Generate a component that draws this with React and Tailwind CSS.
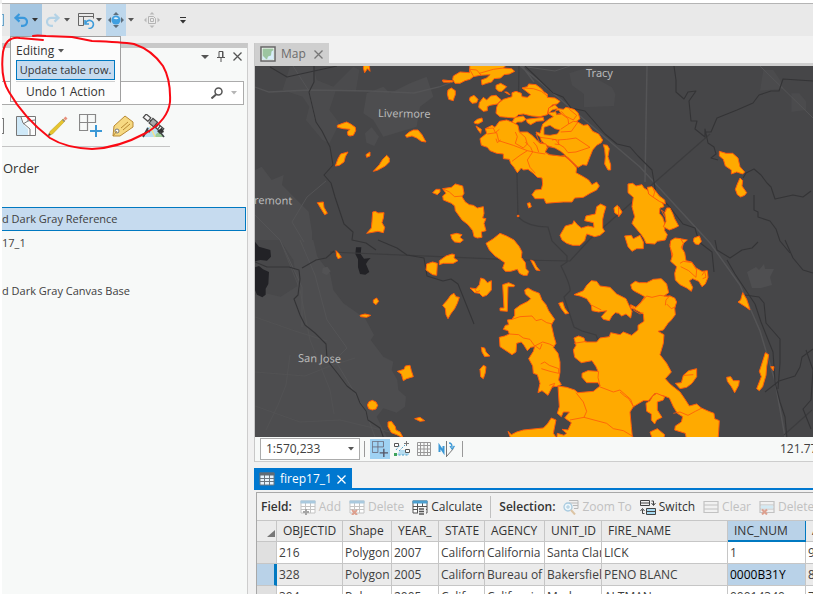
import React from "react";

const Caret = ({ className = "text-[#555]" }) => (
  <svg viewBox="0 0 6 4" className={"h-1 w-1.5 shrink-0 " + className} aria-hidden="true">
    <path d="M0 0h6L3 3.5z" fill="currentColor" />
  </svg>
);

/* ---------- icons ---------- */

const UndoIcon = ({ color }) => (
  <svg viewBox="0 0 14 14" className="h-3.5 w-3.5" fill="none" stroke={color} strokeWidth="2.200">
    <path d="M5.500 1 1.500 4.800l4 3.800M1.500 4.800H9a4 4 0 0 1 0 8H7" />
  </svg>
);

const RedoIcon = ({ color }) => (
  <svg viewBox="0 0 14 14" className="h-3.5 w-3.5" fill="none" stroke={color} strokeWidth="2.200">
    <path d="M8.500 1l4 3.800-4 3.800M12.500 4.800H5a4 4 0 0 0 0 8h2" />
  </svg>
);

const PaneIcon = () => (
  <svg viewBox="0 0 17 17" className="h-[17px] w-[17px]" fill="none">
    <path d="M.5 1.500h15v5M.5 1.500v12h5M.5 4.500h15M5.500 4.500v9" stroke="#666" />
    <path d="M7 8v4h4M7.500 11.500a4 4 0 1 1 3 4.800" stroke="#3d9bd9" strokeWidth="1.600" />
  </svg>
);

const ExploreIcon = () => (
  <svg viewBox="0 0 16 16" className="h-4 w-4">
    <path d="M8 0l3 3H5zM8 16l3-3H5zM0 8l3-3v6zM16 8l-3-3v6z" fill="#5f6f7c" />
    <circle cx="8" cy="8" r="4.500" fill="#3f9fe0" />
    <path d="M5.500 6.500q2-2.500 5 0-2 1.500-5 0" fill="#dff1fb" />
  </svg>
);

const FullExtentIcon = () => (
  <svg viewBox="0 0 16 16" className="h-4 w-4">
    <path d="M8 0l2.500 2.500h-5zM8 16l2.500-2.500h-5zM0 8l2.500-2.500v5zM16 8l-2.500-2.500v5z" fill="#b9b9b9" />
    <path d="M4.500 4.500h5l2 2v5h-7zM6.500 6.500h3v3h-3z" fill="#ececec" stroke="#b4b4b4" />
  </svg>
);

const SelectionIcon = () => (
  <svg viewBox="0 0 20 20" className="h-5 w-5">
    <path d="M.5.5h19v19H.5z" fill="#fbfcfc" stroke="#777" />
    <path d="M1 1h4l2 7 5 5v6H1z" fill="#cfe9f8" />
    <path d="M5 1l2 6 7 6v6M19 4l-7 1-5 3M12 5V1" fill="none" stroke="#777" />
  </svg>
);

const PencilIcon = () => (
  <svg viewBox="0 0 20 20" className="h-5 w-5">
    <path d="M.5 19.500l1.500-4L15 3l2 2L4.500 18z" fill="#e6c52e" stroke="#c3a223" strokeWidth=".6" />
    <path d="M15.500 2.500l2 2 2-2-2-2z" fill="#e8907c" />
    <path d="M14.500 3.500l2 2" stroke="#8a8a8a" strokeWidth="1.300" />
    <path d="M0 20l1-3 2 2z" fill="#444" />
  </svg>
);

const GridPlusIcon = ({ size = "h-[23px] w-[23px]", line = "#888", plus = "#3a98d6", weight = 1.2 }) => (
  <svg viewBox="0 0 23 23" className={size} fill="none">
    <path d="M.5.5h16v8h-8v8h-8zM8.500.5v8h-8" stroke={line} strokeWidth={weight} />
    <path d="M17 11v12M11 17h12" stroke={plus} strokeWidth="2" />
  </svg>
);

const TagIcon = () => (
  <svg viewBox="0 0 22 22" className="h-[22px] w-[22px]">
    <path d="M2 11 13 1l8 6v5L8 21H1z" fill="#f6d982" stroke="#b98a34" />
    <circle cx="5" cy="16" r="2" fill="#fff" stroke="#777" />
    <path d="M9 13l7-6M11 15l7-6M5 16l-4 5" stroke="#b98a34" fill="none" />
  </svg>
);

const SatelliteIcon = () => (
  <svg viewBox="0 0 24 24" className="h-6 w-6">
    <path d="M5 13h11l7 10H1z" fill="#b9dff0" />
    <path d="M14 20l4-3 4 6h-9z" fill="#9dcc9a" />
    <path d="M8 12l5 11" stroke="#f3e28c" strokeWidth="1.500" />
    <g transform="rotate(40 11 9)" stroke="#4a4a4a" strokeWidth="1.200">
      <path d="M0 6.500h6v4.500H0zM16 6.500h7v4.500h-7z" fill="#f4f4f4" />
      <path d="M8 5.500h6v6H8z" fill="#aaa" />
      <path d="M6 8.700h2M14 8.700h2M18.500 6.500v4.500M21 6.500v4.500" fill="none" />
    </g>
    <path d="M6 14L1 23M4 16l4 2" stroke="#444" strokeWidth="1.800" fill="none" />
    <path d="M15 17l5-3 2 4-4 2z" fill="#333" />
    <path d="M18 18l4 5" stroke="#444" strokeWidth="1.500" />
  </svg>
);

const MapIcon = () => (
  <svg viewBox="0 0 16 16" className="h-4 w-4">
    <path d="M1 1h14v14H1z" fill="#fff" stroke="#666" strokeWidth="1.500" />
    <path d="M2.500 2.500h11v11h-11z" fill="#9cc5a0" />
    <path d="M13.500 4v9.500H7l1-3 3-1 .5-4zM2.500 9.500l4 4h-4z" fill="#d8eefb" />
  </svg>
);

const CloseIcon = ({ className }) => (
  <svg viewBox="0 0 9 9" className={"h-[9px] w-[9px] " + className} stroke="currentColor" strokeWidth="1.300">
    <path d="M.5.5l8 8M8.500.5l-8 8" />
  </svg>
);

const TableIcon = ({ head, line, mark }) => (
  <svg viewBox="0 0 16 16" className="h-4 w-4" fill="none">
    <path d="M1 2h14v12H1z" fill="#fff" fillOpacity=".9" stroke={line} />
    <path d="M1 7.500h14M1 10.500h14M5.500 4v10M10.500 4v10" stroke={line} />
    <path d="M.5 1.500h15v3H.5z" fill={head} />
    {mark === "plus" && <path d="M6 10v6M3 13h6" stroke="#a5a5a5" strokeWidth="2" />}
    {mark === "x" && <path d="M3 11l5 5M8 11l-5 5" stroke="#dda08f" strokeWidth="2" />}
    {mark === "calc" && (
      <>
        <path d="M6 8h8v8H6z" fill="#f1f1f1" />
        <path d="M7 10h5M7 12.500h5M7 15h5" stroke="#555" strokeWidth="1.500" />
      </>
    )}
  </svg>
);

const ListIcon = ({ mark }) => (
  <svg viewBox="0 0 16 16" className="h-4 w-4" fill="none">
    <path d="M1 2.500h14v11H1zM1 6h14M1 10h14" stroke="#c2c2c2" strokeWidth="1.200" />
    {mark && <path d="M2 6.500h12v3H2z" fill="#d4eaf4" />}
    {mark && <path d="M3 10.500l5 5M8 10.500l-5 5" stroke="#dda08f" strokeWidth="2" />}
  </svg>
);

const ZoomToIcon = () => (
  <svg viewBox="0 0 16 16" className="h-4 w-4" fill="none">
    <path d="M6 1.500h9v8h-4M6 4h9M10 6.500h5" stroke="#b8b8b8" />
    <circle cx="5" cy="8" r="4" fill="#eef7fb" stroke="#a9cbe0" strokeWidth="1.300" />
    <path d="M3 8h4M5 6v4" stroke="#a9cbe0" />
    <path d="M8 11l4 4.500" stroke="#dcc4a4" strokeWidth="2" />
  </svg>
);

const SwitchIcon = () => (
  <svg viewBox="0 0 16 16" className="h-4 w-4" fill="none">
    <path d="M.5 1.500h9v5h-9zM.5 4h9" stroke="#444" />
    <path d="M6.500 9.500h9v6h-9z" fill="#a9dbf3" stroke="#444" />
    <path d="M6.500 12.500h9M11.500 2h2v4M11.500 4l2 2.500 2-2.500M4.500 14.500h-2v-4M.5 12l2-2.500 2 2.500" stroke="#444" />
  </svg>
);

const SelectedFeatureIcon = () => (
  <svg viewBox="0 0 16 16" className="h-4 w-4" fill="none">
    <path d="M3 14l3-5h9v5z" fill="#b5dcf0" />
    <path d="M.5 2.500h4v3h-4zM11.500 8.500h4v3h-4z" fill="#fff" stroke="#555" />
    <path d="M12.500 0v5M10 2.500h5" stroke="#777" />
    <path d="M2 9l4-5M5 10l6-6M1 14h14" stroke="#4a9fc9" strokeDasharray="2 1.500" />
    <path d="M0 12h3v3H0z" fill="#3fa35a" />
  </svg>
);

const GridIcon = () => (
  <svg viewBox="0 0 14 14" className="h-3.5 w-3.5" fill="none" stroke="#999">
    <path d="M.5.5h13v13H.5zM3.500.5v13M7 .5v13M10.500.5v13M.5 3.500h13M.5 7h13M.5 10.500h13" />
  </svg>
);

const NorthIcon = () => (
  <svg viewBox="0 0 17 16" className="h-4 w-[17px]" fill="none">
    <path d="M1.500 11V5l4 6V5" stroke="#3a98d6" strokeWidth="2" />
    <path d="M8.500 0v16M8.500 15.500l7-8" stroke="#777" />
    <path d="M11 2q3 0 3 4M12 5l2 3 2.500-3" stroke="#3a98d6" strokeWidth="1.300" />
  </svg>
);

const Poly = ({ list }) => list.map((p, i) => <polygon key={i} points={p} />);
const Lines = ({ list }) => list.map((p, i) => <polyline key={i} points={p} />);

/* ---------- map layers; every group is a tile drawn at three units per pixel ---------- */

const firesNW = [
  "262,256 278,250 290,246 302,252 316,262 317,272 310,286 300,288 294,286 292,276 300,268 280,266 262,262",
  "466,286 478,276 490,270 504,270 516,284 528,306 514,304 500,294 486,288 470,292",
  "256,378 264,356 272,342 294,336 286,350 282,366 268,376",
  "348,344 360,336 360,348 350,352",
  "370,394 388,374 398,358 410,346 418,354 418,366 406,378 384,390",
  "202,488 220,486 222,502 232,520 224,524 214,508",
  "368,516 376,514 384,519 402,518 400,534 396,548 404,562 400,578 384,574 350,580 364,564 366,544",
  "342,70 358,78 360,94 352,86 344,98 340,84",
  "578,120 600,122 600,126 580,126",
  "548,458 558,448 570,448 570,456 562,464",
];

const firesN = [
  "40,48 60,36 88,38 90,14 200,14 190,24 215,26 224,34 208,42 192,44 182,54 162,56 155,66 140,70 126,75 124,60 140,54 150,44 120,46 100,50 90,58 75,62 60,70 45,70 38,58",
  "8,61 38,62 38,66 10,66",
  "24,90 34,84 46,92 46,104 42,114 40,122 26,118 22,102",
  "168,76 182,70 200,80 194,86 186,94 176,94 168,86",
  "90,112 102,106 114,118 110,128 96,130 88,120",
  "130,112 140,120 152,108 168,106 184,120 172,132 150,136 142,140 142,152 130,154 116,142 118,128",
  "175,130 190,118 216,110 216,98 228,94 244,100 246,110 262,112 272,104 246,84 262,80 266,72 288,74 304,86 312,96 322,102 322,112 345,114 360,124 352,132 338,134 326,146 322,164 300,170 275,168 250,162 235,164 225,174 200,172 180,170 168,160 170,142",
  "214,190 225,172 250,168 258,178 246,186 232,186 222,196",
  "258,178 310,172 312,182 290,184 272,194 262,188",
  "326,144 345,134 356,146 370,148 378,142 402,148 414,158 420,176 410,184 430,196 444,194 458,214 476,222 488,240 484,248 470,256 458,270 450,290 440,316 428,314 414,322 400,308 380,290 370,280 345,272 338,262 318,256 306,244 296,232 288,216 300,220 308,192 326,178 340,170 324,160",
  "120,236 140,220 136,206 156,196 165,202 178,184 200,180 220,188 234,196 238,216 262,216 276,226 290,240 300,250 318,252 322,262 316,276 326,284 362,288 376,290 396,308 410,324 408,338 430,350 446,360 456,374 470,366 478,378 470,390 450,400 430,412 404,414 396,426 370,426 340,428 318,430 312,416 285,416 276,404 286,390 304,388 308,372 306,354 292,352 280,340 264,328 250,330 244,324 232,338 222,322 212,310 208,298 190,296 190,282 170,280 150,272 142,262 124,256",
  "102,186 112,178 126,174 128,184 114,192 104,190",
  "108,198 124,208 122,220 114,210",
  "490,254 502,256 508,266 504,290 512,314 512,330 504,330 494,312 496,290 494,268",
  "262,430 270,428 274,440 266,444",
  "8,386 34,382 46,372 68,378 72,400 66,410 76,426 88,434 100,436 112,444 130,440 132,460 128,474 138,476 132,490 138,512 124,516 126,532 112,534 102,530 98,512 84,494 66,480 46,452 44,438 34,430 10,420 8,408 18,400",
  "32,524 50,520 66,524 60,532 70,540 60,548 44,546 36,538",
  "360,526 376,498 398,492 402,482 412,494 424,504 444,498 462,502 460,488 434,482 438,468 466,462 470,440 482,432 498,440 492,460 488,478 488,504 494,514 480,526 464,530 440,522 434,542 420,556 398,556 380,550 366,540",
  "522,444 532,436 546,456 538,468 524,458",
  "194,96 202,96 210,104 204,102",
  "232,466 237,466 237,470 232,470",
];
const holesN = [
  "312,202 330,196 345,206 360,210 352,222 330,226 312,224",
  "326,260 345,264 362,274 376,286 362,288 330,284 316,276",
  "346,152 356,150 364,162 350,164",
  "328,158 336,150 352,146 344,156",
  "288,222 300,230 306,250 298,246",
];
const linesN = [
  "90,28 110,30 124,46 118,40 160,28 190,24", "250,84 280,86 304,94 322,108", "100,48 90,30",
  "352,162 362,160 384,176 386,192 362,208", "386,192 400,184 414,186 394,214 362,216", "364,154 376,168 400,180 410,166 388,148",
  "300,232 330,236 352,240 380,238 408,234 450,262 408,276 384,278 372,262 356,252 356,240", "336,240 346,238 358,254 344,252z",
  "142,222 170,218 176,242 220,256 262,272 240,286 216,304", "168,236 172,248 182,240", "226,216 232,230 226,250 250,264 262,252 256,232 238,216",
  "262,272 290,278 316,282", "280,246 290,258 296,276", "256,246 272,262 278,276 262,300 270,322 286,340", "138,206 160,204 166,218 178,208",
  "8,386 28,396 44,410 68,408", "382,290 400,310 412,322",
];

const firesNE = [
  "24,372 38,370 48,378 66,374 72,384 82,390 100,410 126,424 132,440 120,444 118,460 128,472 134,490 134,512 142,524 136,540 112,544 104,552 78,550 72,536 64,524 44,500 36,490 44,470 36,440 40,412 24,398",
  "82,382 96,380 106,392 118,408 134,420 136,432 118,424 100,412 86,402",
  "134,458 140,444 150,444 158,460 164,476 176,498 164,504 148,510 130,500 138,484",
  "14,528 34,526 40,536 60,526 70,546 70,566 50,566 36,574 24,560",
  "222,534 238,528 244,544 236,554 226,552 220,544",
  "298,274 318,280 338,280 354,294 360,320 374,336 368,342 350,336 334,342 334,330 316,318 310,298 298,288",
  "352,372 360,354 368,362 366,378 380,398 374,406 362,411 352,404 346,388",
  "-4,440 6,456 -4,470",
  "150,552 160,540 180,536 202,540 190,550 186,566 182,590 156,590",
];
const linesNE = ["98,382 104,396 100,410", "134,458 124,450 134,470", "140,446 136,456"];

const firesSW = [
  "258,32 266,40 274,52 264,56 260,48",
  "530,72 548,66 562,70 560,106 548,104 528,90",
  "370,180 380,174 386,184 378,194 370,188",
  "330,226 345,222 362,226 350,232 332,230",
  "442,394 462,388 466,378 480,376 484,392 490,410 470,416 460,422 454,402",
  "352,495 357,485 367,481 378,486 383,496 378,507 367,510 356,506",
  "414,546 424,544 436,560 438,570 450,576 460,594 440,584 424,578 414,560",
  "494,536 510,532 524,542 510,544",
];

const firesS = [
  "-2,62 18,48 36,42 44,44 42,54 54,62 40,70 10,70 -2,74",
  "138,10 160,-4 180,-20 200,-12 222,0 238,20 246,36 244,52 256,68 258,86 266,94 262,106 250,106 238,100 232,88 212,94 196,94 188,84 194,68 180,58 165,48 148,30",
  "8,196 22,180 32,166 42,160 48,170 58,172 52,190 44,206 32,222 24,236 18,224 16,206",
  "90,144 108,146 118,134 122,114 134,118 142,128 154,122 154,150 140,166 128,170 118,160 104,158",
  "188,134 206,128 224,136 222,140 204,140 202,214 180,212 180,204 192,204",
  "272,60 282,64 290,80 300,92 288,90 280,76",
  "254,150 264,144 278,152 298,160 306,180 318,194 326,212 344,238 334,254 342,290 348,310 340,322 354,340 360,366 360,396 356,420 364,434 348,440 338,438 332,450 324,466 314,458 306,452 294,458 300,430 292,404 280,400 278,378 266,356 280,334 284,320 272,322 262,332 252,316 244,306 230,310 228,336 216,344 198,332 180,320 178,292 194,288 208,282 204,272 190,268 196,256 206,254 202,240 216,238 224,226 224,208 240,196 264,184 272,176 256,162",
  "356,190 368,186 374,204 386,220 376,222 364,206",
  "402,164 430,152 440,136 454,122 470,124 480,138 510,142 530,162 550,172 558,176 568,198 576,214 572,234 558,222 545,228 536,220 526,218 516,228 508,242 490,238 484,230 500,212 476,216 456,212 454,196 440,176 420,168",
  "402,294 416,288 432,294 436,306 470,306 480,294 508,290 512,278 540,284 550,276 575,286 594,270 594,256 612,244 610,222 595,214 584,208 572,204 572,194 588,202 602,188 614,170 600,162 584,154 576,148 572,134 586,124 598,128 620,128 640,118 664,116 680,132 686,158 672,168 690,168 704,174 710,186 704,204 706,224 694,240 684,250 670,270 654,274 672,284 670,310 660,344 680,370 694,396 676,416 690,432 700,440 720,456 734,476 748,498 770,492 784,504 806,514 822,520 824,536 838,542 836,575 834,600 740,600 736,580 704,570 706,558 724,546 728,530 712,520 700,500 688,474 672,468 658,466 645,460 625,482 610,482 590,494 580,500 570,516 574,560 578,600 350,600 352,580 372,586 380,580 366,568 384,570 394,548 374,534 388,516 370,516 364,530 352,520 358,500 354,438 380,442 404,450 414,458 460,454 480,438 474,428 440,428 426,412 426,400 444,392 474,394 468,380 456,362 424,368 404,352 400,330 408,316",
  "204,574 214,584 230,576 250,570 310,564 322,552 334,534 348,540 344,560 340,580 354,600 214,600",
  "124,322 134,324 138,336 150,348 134,350 126,336",
  "120,388 130,376 138,380 136,398 130,416 122,410",
];
const linesS = [
  "216,238 240,230 276,228 288,242 304,238 320,248 338,252", "208,282 236,284 250,294 270,298 284,318 308,306 328,312 344,320", "286,318 300,328 306,312",
  "302,372 314,366 328,376 356,386 356,400 330,394 304,386z", "328,436 344,430 338,444",
  "478,440 520,456 540,450 572,478 580,500", "408,458 430,486 440,514 432,532 390,540", "432,532 500,550 520,566 550,572 580,590",
  "476,394 474,412 480,438", "402,310 440,304", "104,146 110,156 120,152", "456,196 484,210",
];

const firesSE = [
  "150,20 152,2 165,-6 182,-4 190,10 184,22 194,38 198,62 215,66 228,84 246,94 262,92 264,112 256,132 246,140 236,124 218,116 208,122 218,142 214,154 200,144 180,134 166,120 164,100 170,80 152,64 158,44",
  "354,186 362,180 368,158 380,178 386,196 390,210 376,200",
  "436,338 446,344 440,380 438,406 428,440 418,452 410,446 424,410 418,394 424,376",
  "452,380 462,380 460,392",
  "166,430 184,428 190,406 206,392 230,386 230,410 216,430 200,442 180,446",
  "320,412 332,410 340,422 358,422 356,436 344,458 334,440 322,424",
  "90,576 112,566 134,584 130,600 98,600",
  "98,468 110,460 134,470 130,480 112,486 112,510 126,532 110,540 104,552 94,540 94,522 80,514 78,490 90,482",
];
const linesSE = [
  "30,196 44,206 70,180 80,168 96,172 120,166 146,170", "40,210 60,222 70,218", "136,196 138,180 150,166", "140,192 154,206 168,200",
  "180,70 190,64 216,68 230,90 228,112 206,92 182,80z", "246,106 254,94 258,112 248,116", "192,406 220,404",
  "0,456 14,468 26,476 42,502", "160,520 180,516 204,526 226,514 246,504",
];

const Tile = ({ x, y, fires, holes, lines }) => (
  <g transform={`translate(${x} ${y}) scale(.33333)`} strokeLinejoin="round">
    <g fill="#ffaa00" stroke="#ff5a0a" strokeWidth="3"><Poly list={fires} /></g>
    {holes && <g fill="#464648" stroke="#ff5a0a" strokeWidth="2.500"><Poly list={holes} /></g>}
    {lines && <g fill="none" stroke="#ff5a0a" strokeWidth="2.500"><Lines list={lines} /></g>}
  </g>
);

const FireMap = () => (
  <svg
    viewBox="255 66 558 371"
    preserveAspectRatio="xMinYMin slice"
    className="block h-full w-full bg-[#464648]"
    role="img"
    aria-label="Fire perimeters map"
  >
    {/* built-up areas */}
    <g transform="translate(250 40) scale(.33333)" fill="#4d4d4f">
      <path d="M15 390l20-10 30 40 36-15-5 30 80 80 10 60 0 30H15z" />
      <path d="M120 80h70l10 40 50 20 60-60 18 10-10 60-60 0-20 60 30 40-30 60-20-10-50-60 10-40-20-30-60-20z" opacity=".75" />
      <path d="M350 160l50-20 20 20 60-30 50-20 20 60-40 30-10 60-100 30-30-50-30-20z M345 280l20-18 22 28-14 28-24-10z" />
    </g>
    <g transform="translate(250 240) scale(.33333)" fill="#4d4d4f">
      <path d="M15 0H190L202 50 240 100 250 150 280 190 345 235 372 285 362 300 400 350 430 365 425 390 442 420 445 450 468 470 465 500 440 518 400 505 380 530 410 590H15z" />
      <path d="M15 0H90L130 60 142 138 92 170 40 158 15 165z" fill="#48484a" />
      <path d="M218 84l14-4 10 14-12 12-14-8z" fill="#525254" />
      {/* lakes */}
      <g fill="#222226">
        <path d="M15 5l12 15 34 10 2 20-12 12-20-2-16 4z" />
        <path d="M15 82l12-4 12 10 18 8-2 36-8 14 0 18-10 8-16-8-6-14z" />
        <path d="M318 22l16 0-2 20 10 14 20-2-8 8-6 10 10 24-12 8-16-2-6-20 0-24-8-16z" />
      </g>
    </g>
    <g transform="translate(440 60) scale(.33333)" fill="#4b4b4d">
      <path d="M388 40l60-20 34 14-6 26 40 22 10 20-4 36-90 4 0-40-36-26z" />
    </g>
    <g transform="translate(620 60) scale(.33333)" fill="#4b4b4d">
      <path d="M430 30l30 0 20 30 10 26-70 6z M514 100l24 0 20 24 0 26-44 6z" />
    </g>
    <path d="M747 272l9-5 3 3 5-6 1 5 9 0-4 8 2 8-11 3-9 0z" fill="#4f4f51" />

    {/* roads */}
    <g fill="none" stroke="#545456" strokeWidth="1">
      <path d="M255 87l14 5 40-2 60 1 45 2 25-6 30-11" strokeWidth="1.300" />
      <path d="M293 66l16 25 6 28M326 181l-19 16-15 25 12 20" />
      <path d="M255 215l25 25 22 47 0 40M300 240l15 35 12 45 20 28-12 12 30 50 10 27" />
      <path d="M280 240l20 50 10 50 20 50 4 24M255 317l40 14 32 10M255 372l50 4 25-10 25-8M290 355l-4 30-8 20-12 25M255 406l45 16 40-2 50 12" strokeOpacity=".7" />
      <path d="M647 66l-2 116M522 66l12 16M520 66l20 16 100 85 70 76 30 42 20 46 15 50 10 56" strokeWidth="1.500" />
      <path d="M520 66l35 5 15-5M760 66l53 52" />
    </g>
    {/* county lines */}
    <g fill="none" stroke="#3c3c3e" strokeWidth="1.200">
      <path d="M517 175l2-109M517 175l1 42M330 252l190 8 50 1 20-22 120-105" />
      <path d="M518 217q10 10 30 10l4 14q10 10 15 15l0 6-6 4q10 20 9 25l-6 6 10 30 8 4 14 4 4 10" />
      <path d="M784 435l28-25" />
    </g>
    {/* creeks */}
    <g fill="none" stroke="#343436" strokeWidth="1.100" strokeLinejoin="round">
      <path d="M314 66v16l-5 10 7 30 6 9 8 16 3 18-9 10 7 8 4 14 9 27 9 8-1 8 14 3 10 7M270 67l17 10 50-11" />
      <path d="M255 262l12 5h22l10 3 1 9-2 16-4 4 6 16 5 10 10 8 11 11 1 14 3 6 8 10 9 12 9 7 4 10 6 8 2 9 12 8 5 14" />
      <path d="M302 268l14-8 10-2 8-7M378 240l19 8 10 7 17 3 3 18 16 5 8-2 7 5 12 30 4 10" />
      <path d="M525 66l28 27 10 4 8 11 14 3 20 23 12 10 13 3 8 9 14 14 4 24 12 11 15 19 12 4 4 14 13 10 2 20" />
      <path d="M674 66l2 14 0 12 8 7 4-7 8-1-7 10 2 20 6 0-2 8 10 8 0-8 3 14 6 4 2 7-5 4 7 2M705 132l6 0 6-14 20-8 16-7 6-8 12-4 8 0 4-12 30 2" />
      <path d="M743 178l3-5 8-4 7 6 6 8 4 4 4 12 18-4 10 2 8-6M754 195l0 15 4 2 0 5 12 4 6 8 4 12 10 12" />
      <path d="M715 240l2 10 13 8 12-8 10-2 6-6M727 260l8 14 12 18 8 12 6 18 12 30 2 30 5 20 5 15 2 22-5 10 4 12" />
      <path d="M745 295l14 2 5 6 2 20 14 16 0 24-2 26" />
      <path d="M785 240l8 18 10 12 10 3M765 392l14-11 16-5 5-9 2-10 11-8M806 350l7 20-2 30-8 9 8 20" />
    </g>

    <Tile x={250} y={40} fires={firesNW} />
    <Tile x={250} y={240} fires={firesSW} />
    <Tile x={440} y={240} fires={firesS} lines={linesS} />
    <Tile x={440} y={60} fires={firesN} holes={holesN} lines={linesN} />
    <Tile x={620} y={60} fires={firesNE} lines={linesNE} />
    <Tile x={620} y={240} fires={firesSE} lines={linesSE} />

    <g fill="#b9b9b9" fontFamily="'Noto Sans', 'Open Sans', sans-serif" fontSize="11">
      <text x="378" y="117" transform="rotate(1 378 117)">Livermore</text>
      <text x="586" y="77">Tracy</text>
      <text x="254" y="204" transform="rotate(1 254 204)">remont</text>
      <text x="298" y="362" transform="rotate(1 298 362)">San Jose</text>
    </g>
  </svg>
);

/* ---------- attribute table ---------- */

const columns = [
  { name: "OBJECTID", w: "w-[66px]" },
  { name: "Shape", w: "w-[49px]" },
  { name: "YEAR_", w: "w-[47px]" },
  { name: "STATE", w: "w-[46px]" },
  { name: "AGENCY", w: "w-[60px]" },
  { name: "UNIT_ID", w: "w-[57px]" },
  { name: "FIRE_NAME", w: "w-[126px]" },
  { name: "INC_NUM", w: "w-[78px]" },
  { name: "A", w: "w-[80px]" },
];
const rows = [
  ["216", "Polygon", "2007", "Californ", "California", "Santa Clar", "LICK", "1", "9"],
  ["328", "Polygon", "2005", "Californ", "Bureau of", "Bakersfiel", "PENO BLANC", "0000B31Y", "8"],
  ["394", "Polygon", "2005", "Californ", "California", "Madera", "ALTMAN", "00014340", "7"],
];

const AttributeTable = () => (
  <table className="w-full table-fixed border-separate border-spacing-0 text-left text-xs text-[#404040]">
    <thead>
      <tr className="h-[21px] bg-[#ebebeb]">
        <th className="w-5 border-r border-b border-[#c6c6c6] p-0 align-bottom" aria-label="Row">
          <svg viewBox="0 0 8 7" className="mb-1 ml-2.5 h-[7px] w-2"><path d="M8 0v7H0z" fill="#777" /></svg>
        </th>
        {columns.map((c) => (
          <th
            key={c.name}
            scope="col"
            className={
              c.w + " overflow-hidden border-r p-0 pl-1.5 font-normal whitespace-nowrap text-[#333] " +
              (c.name === "INC_NUM"
                ? "border-b-2 border-r-[#0079c1] border-b-[#0079c1] bg-[#b9d2e8]"
                : "border-b border-[#c6c6c6]")
            }
          >
            {c.name}
          </th>
        ))}
      </tr>
    </thead>
    <tbody>
      {rows.map((r, i) => (
        <tr key={r[0]} className={"h-[22px] " + (i === 1 ? "bg-[#ebebeb]" : "bg-white")}>
          <td className={"border-b border-[#c6c6c6] p-0 " + (i === 1 ? "border-r-3 border-r-[#0079c1] bg-[#b9d2e8]" : "border-r bg-[#e0e0e0]")} />
          {r.map((v, j) => (
            <td
              key={j}
              className={
                "border-r border-b border-[#c6c6c6] p-0 pl-0.5 " +
                (i === 1 && j === 7 ? "bg-[#b9d2e8] text-black" : "")
              }
            >
              <div className="overflow-hidden whitespace-nowrap">{v}</div>
            </td>
          ))}
        </tr>
      ))}
    </tbody>
  </table>
);

const ToolBtn = ({ icon, label, off }) => (
  <button type="button" disabled={off} className={"flex shrink-0 items-center gap-[3px] " + (off ? "text-[#c0c0c0]" : "text-[#333]")}>
    {icon}
    {label}
  </button>
);

export default function App() {
  return (
    <div className="relative flex h-screen flex-col overflow-hidden bg-[#f1f1f1] font-['Open_Sans','Noto_Sans',sans-serif] text-xs leading-4 text-[#404040]">
      <div className="ml-0.5 h-1 shrink-0 border-b border-[#b4b4b4] bg-white" />

      {/* quick access toolbar */}
      <header className="flex h-8 shrink-0 items-center border-l-2 border-white bg-[#e9e9e9]">
        <span className="mr-1.5 h-3 w-0.5 border-y border-r border-[#6aa3c8] bg-[#d5ebf8]" />
        <button type="button" aria-label="Undo" className="flex h-full w-8 items-center justify-between bg-[#a5c6e1] px-1">
          <UndoIcon color="#3a98dc" />
          <Caret className="text-[#333]" />
        </button>
        <button type="button" aria-label="Redo" className="flex h-full w-8 items-center justify-between px-1">
          <RedoIcon color="#b3d2e6" />
          <Caret />
        </button>
        <button type="button" aria-label="Pane history" className="flex h-full w-8 items-center justify-between px-1">
          <PaneIcon />
          <Caret />
        </button>
        <button type="button" aria-label="Explore" className="flex h-full w-5 items-center justify-center bg-[#bdd7ec]">
          <ExploreIcon />
        </button>
        <button type="button" aria-label="Explore options" className="px-0.5"><Caret /></button>
        <button type="button" aria-label="Full extent" className="ml-2"><FullExtentIcon /></button>
        <button type="button" aria-label="Customize" className="ml-5 flex flex-col gap-0.5">
          <span className="h-px w-1.5 bg-[#333]" />
          <Caret className="text-[#333]" />
        </button>
      </header>

      <div className="flex min-h-0 flex-1 border-l-2 border-white pt-[7px]">
        {/* contents pane */}
        <aside className="mr-1.5 w-[246px] shrink-0 border-t-5 border-r border-t-[#c8c8c8] border-r-[#cdcdcd] bg-[#f7f9f8]">
          <div className="flex h-4 items-center justify-end gap-2 pr-[5px]">
            <button type="button" aria-label="Pane options" className="pt-px">
              <svg viewBox="0 0 8 4" className="h-1 w-2"><path d="M0 0h8L4 4z" fill="#555" /></svg>
            </button>
            <button type="button" aria-label="Pin">
              <svg viewBox="0 0 8 11" className="h-[11px] w-2" fill="none" stroke="#555"><path d="M2 .5h4v6H2zM0 6.500h8M4 7v4M5.500 1v5" /></svg>
            </button>
            <button type="button" aria-label="Close pane"><CloseIcon className="text-[#555]" /></button>
          </div>
          <div className="mt-[17px] mr-[3px] flex h-6 items-center border border-l-0 border-[#ababab] bg-white pr-1.5">
            <input aria-label="Search" className="min-w-0 flex-1 bg-transparent outline-none" />
            <svg viewBox="0 0 12 12" className="mr-2 h-3 w-3" fill="none" stroke="#555" strokeWidth="1.500">
              <circle cx="7.500" cy="4.500" r="3.500" /><path d="M5 7.500L.5 11.500" strokeWidth="2" />
            </svg>
            <Caret className="text-[#b5b5b5]" />
          </div>
          <div className="mr-[77px] flex h-[42px] items-center border-b border-[#c4c4c4]">
            <span className="h-4 w-0.5 border-y border-r border-[#777]" />
            <button type="button" aria-label="Selection" className="ml-3"><SelectionIcon /></button>
            <button type="button" aria-label="Editing" className="ml-3"><PencilIcon /></button>
            <button type="button" aria-label="Snapping" className="ml-[11px]"><GridPlusIcon /></button>
            <button type="button" aria-label="Labeling" className="ml-2.5"><TagIcon /></button>
            <button type="button" aria-label="Imagery" className="ml-2"><SatelliteIcon /></button>
          </div>
          <h2 className="mt-[11px] pl-px text-[13px] leading-5 font-normal text-[#333]">Order</h2>
          <ul className="mt-[29px] text-[11px]">
            <li className="mr-px flex h-6 items-center border border-l-0 border-[#0079c1] bg-[#c6dbef]">d Dark Gray Reference</li>
            <li className="flex h-6 items-center">17_1</li>
            <li className="h-6" />
            <li className="flex h-6 items-center">d Dark Gray Canvas Base</li>
          </ul>
        </aside>

        <main className="flex min-w-0 flex-1 flex-col">
          {/* map view */}
          <section className="flex min-h-0 flex-1 flex-col border-l border-[#c8c8c8]">
            <div className="flex h-5 shrink-0 items-center">
              <div className="flex h-full w-[74px] items-center bg-[#cfcfcf] pt-0.5 pl-[5px] text-[#6b6b6b]">
                <MapIcon />
                <span className="ml-[5px] flex-1">Map</span>
                <button type="button" aria-label="Close map" className="mr-1.5"><CloseIcon className="text-[#777]" /></button>
              </div>
            </div>
            <div className="h-[3px] shrink-0 bg-[#cfcfcf]" />
            <div className="min-h-0 flex-1 overflow-hidden"><FireMap /></div>
            <div className="flex h-[25px] shrink-0 items-center border-b border-[#cdcdcd] bg-[#f7f9f8] pl-[5px]">
              <select
                aria-label="Map scale"
                defaultValue="s"
                className="h-[22px] w-[100px] appearance-none border border-[#ababab] bg-white pl-[5px]"
              >
                <option value="s">1:570,233</option>
              </select>
              <span className="-ml-3 mr-2.5 flex"><Caret /></span>
              <span className="mr-[5px] h-4 w-px bg-[#999]" />
              <button type="button" aria-label="Snapping" className="flex h-5 w-5 items-center justify-center bg-[#9fd2f3]">
                <GridPlusIcon size="h-4 w-4" line="#667" plus="#556" />
              </button>
              <button type="button" aria-label="Selected features" className="ml-1"><SelectedFeatureIcon /></button>
              <button type="button" aria-label="Grid" className="ml-[7px]"><GridIcon /></button>
              <button type="button" aria-label="North" className="ml-[7px]"><NorthIcon /></button>
              <span className="ml-[7px] h-4 w-px bg-[#999]" />
              <span className="ml-auto w-[33px] overflow-hidden whitespace-nowrap">121.77</span>
            </div>
          </section>

          {/* table view */}
          <section className="mt-1.5 flex h-[126px] shrink-0 flex-col overflow-hidden">
            <div className="flex h-[22px] shrink-0 border-b-2 border-[#0078d0]">
              <div className="flex w-[98px] items-center bg-[#0078d0] pt-0.5 pl-[5px] text-white">
                <TableIcon head="#5f6b75" line="#6b7680" />
                <span className="ml-[5px] flex-1">firep17_1</span>
                <button type="button" aria-label="Close table" className="mr-1.5"><CloseIcon className="text-white" /></button>
              </div>
            </div>
            <div className="mt-0.5 ml-0.5 flex-1 border-t border-l border-[#a8a8a8]">
              <div className="flex h-7 items-center gap-2 overflow-hidden border-b border-[#c6c6c6] pl-1 whitespace-nowrap">
                <span className="font-semibold text-[#333]">Field:</span>
                <ToolBtn off icon={<TableIcon head="#a9c9de" line="#c4c4c4" mark="plus" />} label="Add" />
                <ToolBtn off icon={<TableIcon head="#a9c9de" line="#c4c4c4" mark="x" />} label="Delete" />
                <ToolBtn icon={<TableIcon head="#4a9fd0" line="#555" mark="calc" />} label="Calculate" />
                <span className="h-[22px] w-px shrink-0 bg-[#c0c0c0]" />
                <span className="font-semibold text-[#333]">Selection:</span>
                <ToolBtn off icon={<ZoomToIcon />} label="Zoom To" />
                <ToolBtn icon={<SwitchIcon />} label="Switch" />
                <ToolBtn off icon={<ListIcon />} label="Clear" />
                <ToolBtn off icon={<ListIcon mark />} label="Delete" />
              </div>
              <AttributeTable />
            </div>
          </section>
        </main>
      </div>

      {/* undo menu */}
      <div role="menu" className="absolute top-9 left-2.5 w-[111px] border border-[#a0a0a0] bg-[#fcfcfc] px-[5px] pt-1.5 text-[#333]">
        <button type="button" className="flex items-center gap-1">Editing <Caret /></button>
        <button type="button" role="menuitem" className="mt-px block h-5 w-[99px] border border-[#0079c1] bg-[#c6dbef] text-center text-[11px] whitespace-nowrap">
          Update table row.
        </button>
        <button type="button" role="menuitem" className="mt-px block h-5 w-full border-t border-[#d0d0d0] text-center whitespace-nowrap">
          Undo 1 Action
        </button>
      </div>

      {/* hand-drawn highlight */}
      <svg viewBox="0 0 200 160" className="pointer-events-none absolute top-0 left-0 h-40 w-50" fill="none" stroke="#fa0a14" strokeWidth="2" strokeLinecap="round">
        <path d="M43 40L20 38Q6 36 3 52Q0 78 9 92Q24 118 50 138Q66 148 92 149Q118 148 146 133Q168 120 170 102Q171 80 163 66Q152 50 134 44Q122 42 92 41L72 37L46 36Q36 35 33 36" />
      </svg>
    </div>
  );
}
